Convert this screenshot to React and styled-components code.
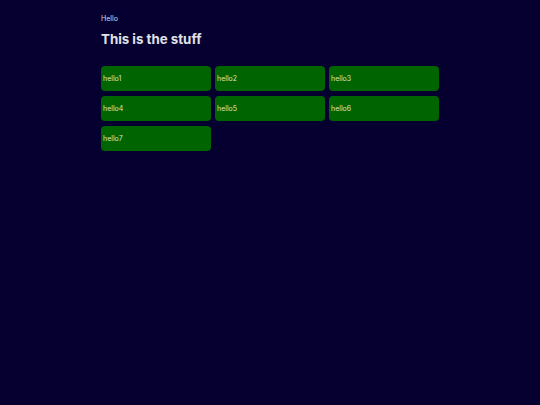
import React from "react";
import styled, { createGlobalStyle } from "styled-components";

const items = ["hello1", "hello2", "hello3", "hello4", "hello5", "hello6", "hello7"];

export default function App() {
  return (
    <>
      <GlobalStyle />
      <Page>
        <Small>Hello</Small>
        <Title>This is the stuff</Title>
        <Grid>
          {items.map((item) => (
            <Card key={item}>{item}</Card>
          ))}
        </Grid>
      </Page>
    </>
  );
}

const GlobalStyle = createGlobalStyle`
  html, body {
    margin: 0;
    background: #05002f;
    min-height: 100%;
  }
  body {
    font-family: Inter, "Liberation Sans", sans-serif;
    color: #d8d8e0;
  }
`;

const Page = styled.main`
  width: 338px;
  margin: 0 auto;
  padding-top: 14px;
  min-height: 391px;
`;

const Small = styled.div`
  font-size: 7px;
  line-height: 9px;
  color: #dcdce4;
`;

const Title = styled.h1`
  margin: 8px 0 0;
  font-size: 13.3px;
  line-height: 17px;
  font-weight: 700;
  color: #e0e0e8;
`;

const Grid = styled.div`
  display: grid;
  grid-template-columns: repeat(3, 110px);
  column-gap: 4px;
  row-gap: 5px;
  margin-top: 18px;
`;

const Card = styled.div`
  height: 25px;
  display: flex;
  align-items: center;
  padding: 0 2px;
  background: #006400;
  border-radius: 4px;
  font-size: 7px;
  color: #d4e4d0;
`;
